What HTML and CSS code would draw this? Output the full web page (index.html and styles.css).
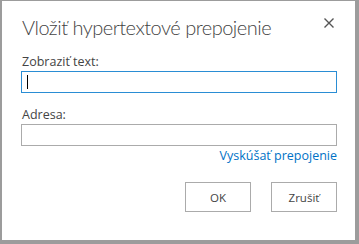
FILE: index.html
```html
<!DOCTYPE html>
<html lang="sk">
<head>
<meta charset="utf-8">
<link rel="stylesheet" href="styles.css">
</head>
<body>
<div class="dialog">
  <div class="header">
    <h1 class="title">Vložiť hypertextové prepojenie</h1>
    <button class="close" aria-label="Zavrieť">
      <svg width="10" height="10" viewBox="0 0 10 10"><path d="M0.5 0.5L9.5 9.5M9.5 0.5L0.5 9.5" stroke="#555" stroke-width="1.4" fill="none"/></svg>
    </button>
  </div>
  <div class="body">
    <label class="label">Zobraziť text:</label>
    <div class="input focused"><span class="caret"></span></div>
    <label class="label second">Adresa:</label>
    <div class="input"></div>
    <div class="linkrow"><a class="link">Vyskúšať prepojenie</a></div>
    <div class="buttons">
      <button class="btn">OK</button>
      <button class="btn">Zrušiť</button>
    </div>
  </div>
</div>
</body>
</html>
```
FILE: styles.css
```css
html, body {
  margin: 0;
  padding: 0;
}
body {
  width: 359px;
  height: 244px;
  background: #9c9c9c;
  box-sizing: border-box;
  padding: 1px 4px 4px 2px;
  font-family: "Open Sans", "Segoe UI", sans-serif;
  color: #444;
}
.dialog {
  background: #fff;
  height: 100%;
  box-sizing: border-box;
  padding: 0 18px 0 19px;
}
.header {
  display: flex;
  justify-content: space-between;
  align-items: flex-start;
  height: 52px;
}
.title {
  margin: 13px 0 0 1px;
  font-family: "Lato", "Open Sans", sans-serif;
  font-weight: 300;
  font-size: 20px;
  letter-spacing: -0.5px;
  line-height: 26px;
  color: #444;
}
.close {
  border: 0;
  background: none;
  padding: 0;
  margin: 17px 0 0 0;
  width: 16px;
  height: 12px;
  display: flex;
  justify-content: center;
}
.body {
  display: flex;
  flex-direction: column;
}
.label {
  font-size: 12.5px;
  line-height: 18px;
  margin-left: 1px;
  color: #444;
}
.second {
  margin-top: 13px;
}
.input {
  height: 22px;
  border: 1px solid #ababab;
  box-sizing: border-box;
  display: flex;
  align-items: center;
}
.focused {
  border-color: #2a8dd4;
}
.caret {
  width: 1px;
  height: 14px;
  background: #000;
  margin-left: 5px;
}
.linkrow {
  display: flex;
  justify-content: flex-end;
  margin-top: 1px;
}
.link {
  font-size: 12.5px;
  line-height: 17px;
  color: #0072c6;
}
.buttons {
  display: flex;
  justify-content: flex-end;
  gap: 20px;
  margin-top: 18px;
}
.btn {
  width: 66px;
  height: 30px;
  border: 1px solid #ababab;
  background: #fff;
  font-family: "Open Sans", sans-serif;
  font-size: 11.5px;
  color: #444;
  padding: 0;
}
```
